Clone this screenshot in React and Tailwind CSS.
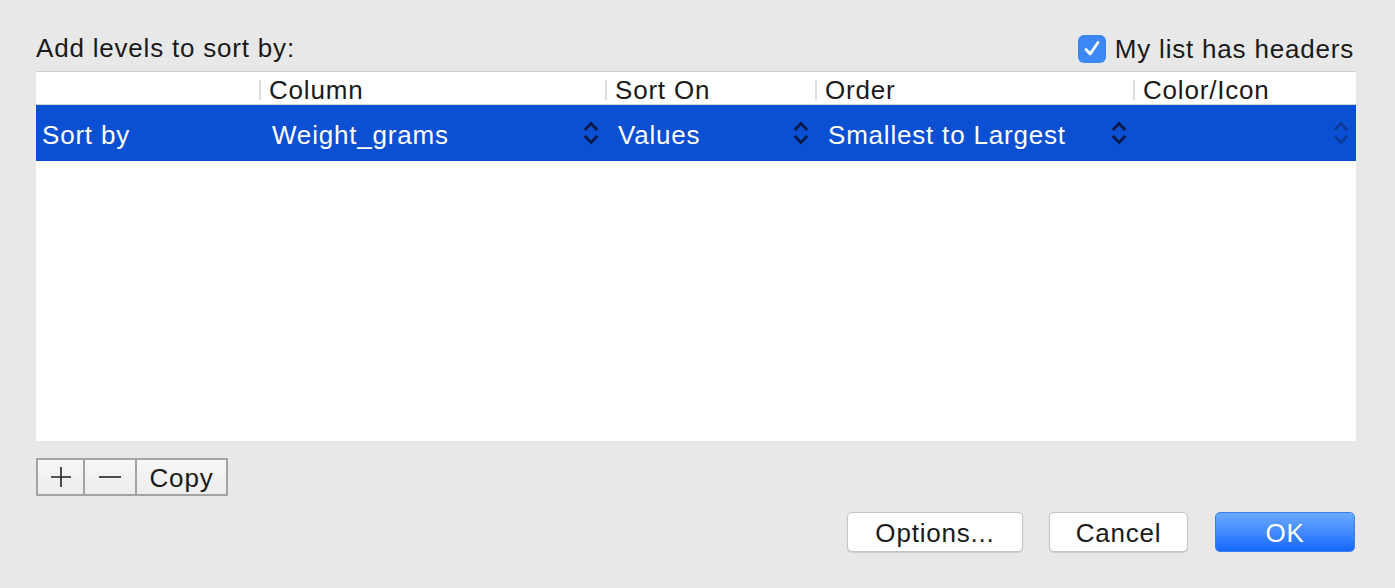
import React from "react";

const font = { fontFamily: '"Liberation Sans", Arial, sans-serif' };

function Chevrons({ faded }) {
  return (
    <svg width="16" height="26" viewBox="0 0 16 26" className={faded ? "opacity-40" : ""}>
      <path d="M1.8 10 L8 3.5 L14.2 10" fill="none" stroke="#0b1a44" strokeWidth="2.6" />
      <path d="M1.8 16 L8 22.5 L14.2 16" fill="none" stroke="#0b1a44" strokeWidth="2.6" />
    </svg>
  );
}

function HeadCell({ w, label, sep = true }) {
  return (
    <div className="flex items-center h-full" style={{ width: w }}>
      {sep && <div className="w-[2px] h-[20px] bg-[#dcdcdc] mr-[8px]" />}
      <span>{label}</span>
    </div>
  );
}

export default function App() {
  return (
    <div className="w-[1395px] h-[588px] bg-[#e8e8e8] text-[#1a1a1a] flex flex-col text-[26px] tracking-[0.8px]" style={font}>
      <div className="flex items-end justify-between pl-[36px] pr-[41px] pt-[30px] h-[71px] pb-[8px]">
        <div className="leading-none pb-[2px]">Add levels to sort by:</div>
        <div className="flex items-center gap-[9px]">
          <div className="w-[28px] h-[28px] rounded-[6px] bg-[#3b88f5] flex items-center justify-center">
            <svg width="20" height="20" viewBox="0 0 20 20">
              <path d="M4 10.5 L8.2 15 L16 3.5" fill="none" stroke="white" strokeWidth="2.8" strokeLinecap="round" strokeLinejoin="round" />
            </svg>
          </div>
          <span className="leading-none">My list has headers</span>
        </div>
      </div>

      <div className="ml-[36px] w-[1320px] h-[370px] bg-white border-t border-[#cdcdcd] flex flex-col">
        <div className="h-[33px] flex leading-none border-b border-[#d2d2d2] pt-[4px]">
          <div className="w-[223px]" />
          <HeadCell w={346} label="Column" />
          <HeadCell w={210} label="Sort On" />
          <HeadCell w={318} label="Order" />
          <HeadCell w={223} label="Color/Icon" />
        </div>
        <div className="h-[56px] bg-[#0b50d3] text-white leading-none flex items-center">
          <div className="w-[223px] pl-[6px] pt-[4px]">Sort by</div>
          <div className="w-[346px] flex items-center justify-between pl-[13px] pr-[6px]">
            <span className="pt-[4px]">Weight_grams</span>
            <Chevrons />
          </div>
          <div className="w-[210px] flex items-center justify-between pl-[13px] pr-[6px]">
            <span className="pt-[4px]">Values</span>
            <Chevrons />
          </div>
          <div className="w-[318px] flex items-center justify-between pl-[13px] pr-[6px]">
            <span className="pt-[4px]">Smallest to Largest</span>
            <Chevrons />
          </div>
          <div className="w-[223px] flex items-center justify-end pr-[7px]">
            <Chevrons faded />
          </div>
        </div>
      </div>

      <div className="ml-[36px] mt-[17px] flex h-[38px] w-[192px] border-2 border-[#a3a3a3] bg-gradient-to-b from-[#f7f7f7] to-[#ececec] leading-none">
        <div className="w-[47px] flex items-center justify-center border-r-2 border-[#a3a3a3]">
          <svg width="22" height="22" viewBox="0 0 22 22">
            <path d="M11 1 V21 M1 11 H21" stroke="#222" strokeWidth="1.6" />
          </svg>
        </div>
        <div className="w-[52px] flex items-center justify-center border-r-2 border-[#a3a3a3]">
          <svg width="22" height="22" viewBox="0 0 22 22">
            <path d="M0 11 H22" stroke="#222" strokeWidth="1.6" />
          </svg>
        </div>
        <div className="flex-1 flex items-center justify-center pt-[2px]">Copy</div>
      </div>

      <div className="mt-[16px] flex justify-end pr-[40px] leading-none">
        <button className="w-[176px] h-[40px] bg-white rounded-[5px] border border-[#c4c4c4] shadow-[0_1px_1px_rgba(0,0,0,0.12)] flex items-center justify-center pt-[2px]">Options...</button>
        <button className="ml-[26px] w-[139px] h-[40px] bg-white rounded-[5px] border border-[#c4c4c4] shadow-[0_1px_1px_rgba(0,0,0,0.12)] flex items-center justify-center pt-[2px]">Cancel</button>
        <button className="ml-[27px] w-[140px] h-[40px] rounded-[5px] bg-gradient-to-b from-[#6aa9fb] to-[#1467fd] border border-[#3c7ef0] text-white flex items-center justify-center pt-[2px]">OK</button>
      </div>
    </div>
  );
}
